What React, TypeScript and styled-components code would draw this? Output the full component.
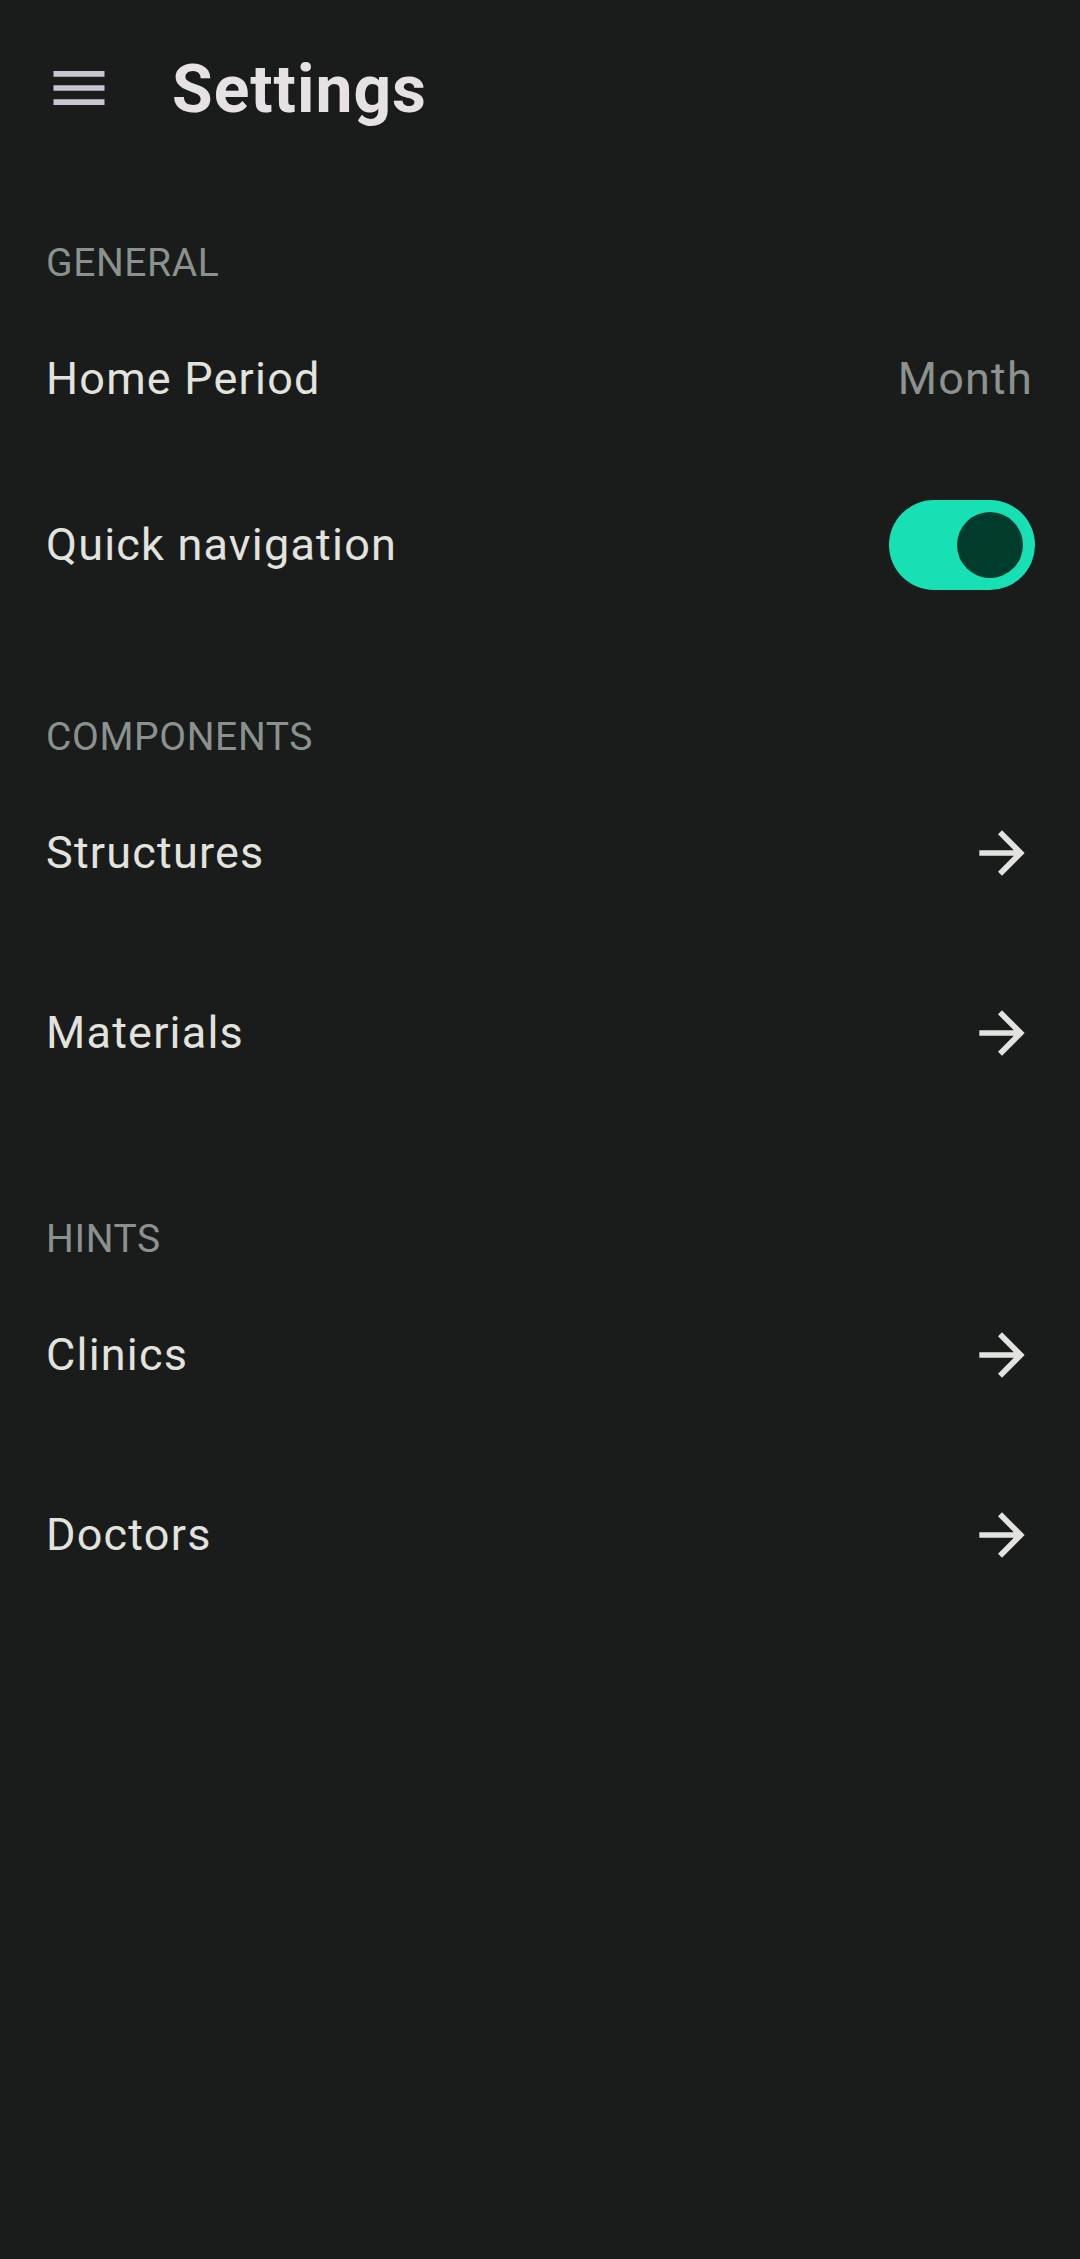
import React from "react";
import styled, { createGlobalStyle } from "styled-components";

const Global = createGlobalStyle`
  html, body {
    margin: 0;
    padding: 0;
    background: #1a1c1b;
  }
  body {
    font-family: Roboto, "Noto Sans", sans-serif;
  }
`;

const Screen = styled.div`
  width: 1080px;
  min-height: 2259px;
  background: #1a1c1b;
  display: flex;
  flex-direction: column;
`;

const TopBar = styled.header`
  height: 178px;
  display: flex;
  align-items: center;
  padding-left: 45px;
  gap: 59px;
`;

const MenuButton = styled.div`
  width: 68px;
  height: 68px;
  display: flex;
  align-items: center;
  justify-content: center;
  color: #cac4d0;
  margin-top: -2px;
`;

const Title = styled.h1`
  margin: 2px 0 0;
  font-family: Roboto, sans-serif;
  font-size: 66px;
  font-weight: 700;
  color: #e6e1e5;
  line-height: 1;
  letter-spacing: 1px;
`;

const Content = styled.main`
  display: flex;
  flex-direction: column;
  gap: 90px;
  padding-top: 59px;
`;

const Section = styled.section`
  display: flex;
  flex-direction: column;
`;

const SectionLabel = styled.div`
  height: 52px;
  line-height: 52px;
  padding: 0 45px 0 46px;
  font-size: 39px;
  letter-spacing: 0.6px;
  color: #89928e;
  text-transform: uppercase;
`;

const Row = styled.div<{ $h: number }>`
  height: ${(p) => p.$h}px;
  display: flex;
  align-items: center;
  justify-content: space-between;
  padding: 0 45px 0 46px;
`;

const RowLabel = styled.span`
  font-size: 45px;
  line-height: 54px;
  letter-spacing: 1.2px;
  color: #e2e3df;
`;

const RowValue = styled.span`
  font-size: 45px;
  line-height: 54px;
  letter-spacing: 1.2px;
  color: #8c928f;
  margin-right: 2px;
`;

const Track = styled.div<{ $on: boolean }>`
  width: 146px;
  height: 90px;
  border-radius: 45px;
  background: ${(p) => (p.$on ? "#17e0b5" : "#3f4945")};
  display: flex;
  align-items: center;
  justify-content: ${(p) => (p.$on ? "flex-end" : "flex-start")};
  padding: 0 12px;
  box-sizing: border-box;
`;

const Thumb = styled.div`
  width: 66px;
  height: 66px;
  border-radius: 50%;
  background: #003b2c;
`;

const ArrowBox = styled.div`
  width: 68px;
  height: 68px;
  display: flex;
  align-items: center;
  justify-content: center;
  color: #e2e3df;
  margin-right: -1px;
`;

const MenuIcon = () => (
  <svg width="68" height="68" viewBox="0 0 24 24" fill="currentColor">
    <path d="M3 18h18v-2H3v2zm0-5h18v-2H3v2zm0-7v2h18V6H3z" />
  </svg>
);

const ArrowIcon = () => (
  <svg width="68" height="68" viewBox="0 0 24 24" fill="currentColor">
    <path d="M12 4l-1.41 1.41L16.17 11H4v2h12.17l-5.58 5.59L12 20l8-8z" />
  </svg>
);

const NavRow = ({ label }: { label: string }) => (
  <Row $h={180}>
    <RowLabel>{label}</RowLabel>
    <ArrowBox>
      <ArrowIcon />
    </ArrowBox>
  </Row>
);

export default function App() {
  return (
    <>
      <Global />
      <Screen>
        <TopBar>
          <MenuButton>
            <MenuIcon />
          </MenuButton>
          <Title>Settings</Title>
        </TopBar>
        <Content>
          <Section>
            <SectionLabel>General</SectionLabel>
            <Row $h={180}>
              <RowLabel>Home Period</RowLabel>
              <RowValue>Month</RowValue>
            </Row>
            <Row $h={152}>
              <RowLabel>Quick navigation</RowLabel>
              <Track $on={true}>
                <Thumb />
              </Track>
            </Row>
          </Section>
          <Section>
            <SectionLabel>Components</SectionLabel>
            <NavRow label="Structures" />
            <NavRow label="Materials" />
          </Section>
          <Section>
            <SectionLabel>Hints</SectionLabel>
            <NavRow label="Clinics" />
            <NavRow label="Doctors" />
          </Section>
        </Content>
      </Screen>
    </>
  );
}
